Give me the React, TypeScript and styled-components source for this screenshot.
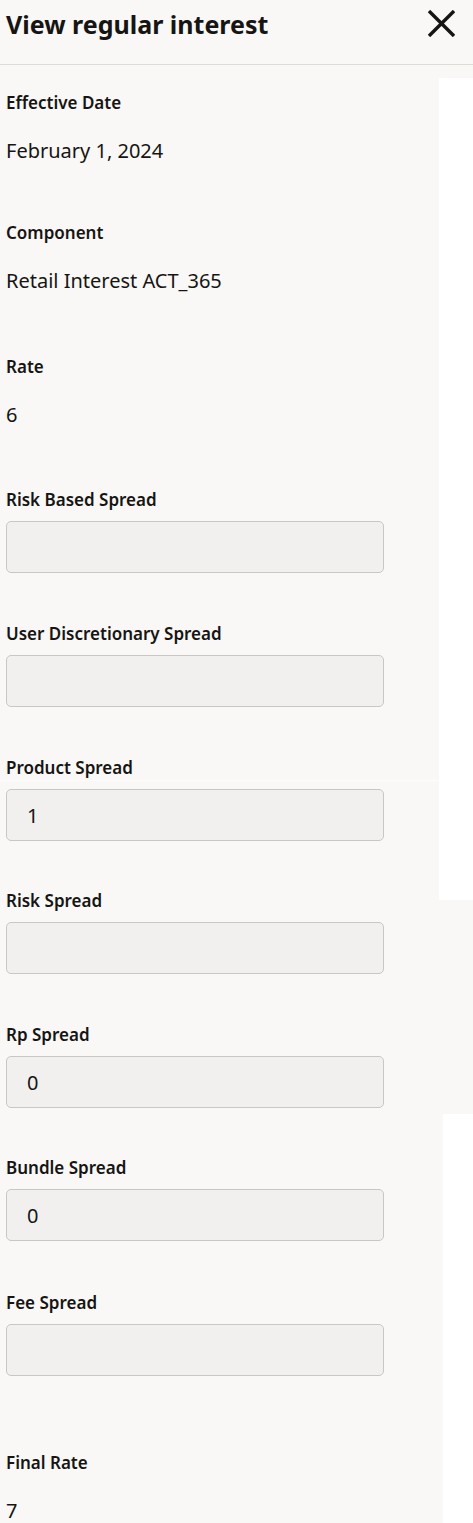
import styled, {createGlobalStyle} from "styled-components";

const GlobalStyle = createGlobalStyle`
html, body {
    margin: 0;
    padding: 0;
    background: #ffffff;
}
body {
    font-family: "Noto Sans", "Liberation Sans", sans-serif;
    color: #161513;
}
`;

type Field = {
    label: string,
    value?: string,
    input?: boolean,
    gapAfter: number,
}

const fields: Field[] = [
    {label: "Effective Date", value: "February 1, 2024", gapAfter: 58},
    {label: "Component", value: "Retail Interest ACT_365", gapAfter: 62},
    {label: "Rate", value: "6", gapAfter: 61},
    {label: "Risk Based Spread", input: true, value: "", gapAfter: 49},
    {label: "User Discretionary Spread", input: true, value: "", gapAfter: 49},
    {label: "Product Spread", input: true, value: "1", gapAfter: 48},
    {label: "Risk Spread", input: true, value: "", gapAfter: 49},
    {label: "Rp Spread", input: true, value: "0", gapAfter: 48},
    {label: "Bundle Spread", input: true, value: "0", gapAfter: 50},
    {label: "Fee Spread", input: true, value: "", gapAfter: 75},
    {label: "Final Rate", value: "7", gapAfter: 0},
];

// the pale strips on the right side of the reference are part of the panel surface
const Panel = styled.div`
min-height: 1523px;
background:
    linear-gradient(#ffffff, #ffffff) no-repeat right 0 top 78px / 34px 822px,
    linear-gradient(#ffffff, #ffffff) no-repeat right 0 top 1114px / 30px 409px,
    linear-gradient(#fdfdfc, #fdfdfc) no-repeat left 0 top 780px / 439px 1px,
    #f9f8f6;
`;

const Header = styled.header`
display: flex;
align-items: center;
justify-content: space-between;
height: 65px;
box-sizing: border-box;
padding: 0 18px 17px 6px;
border-bottom: 1px solid #dddbd8;
`;

const Title = styled.h1`
margin: 0;
font-size: 25px;
font-weight: 700;
line-height: 32px;
`;

const CloseButton = styled.button`
display: flex;
background: transparent;
border: none;
padding: 0;
cursor: pointer;
color: #161513;
`;

const Body = styled.div`
padding: 26px 0 0 6px;
`;

const FieldBlock = styled.div<{$gap: number}>`
display: flex;
flex-direction: column;
margin-bottom: ${p => p.$gap}px;
`;

const Label = styled.div`
font-size: 17px;
font-weight: 600;
line-height: 24px;
`;

const Value = styled.div`
margin-top: 24px;
font-size: 20px;
line-height: 24px;
`;

const InputBox = styled.div`
margin-top: 9px;
width: 378px;
height: 52px;
box-sizing: border-box;
border: 1px solid #c9c7c4;
border-radius: 5px;
background: #f1f0ee;
display: flex;
align-items: center;
padding-left: 20px;
font-size: 20px;
`;

function CloseIcon() {
    return <svg width="27" height="27" viewBox="0 0 27 27" fill="none">
        <path d="M1 1 L26 26 M26 1 L1 26" stroke="currentColor" strokeWidth="3.4" />
    </svg>;
}

export default function App() {
    return <>
        <GlobalStyle />
        <Panel>
            <Header>
                <Title>View regular interest</Title>
                <CloseButton title="Close"><CloseIcon /></CloseButton>
            </Header>
            <Body>
                {fields.map(f => <FieldBlock key={f.label} $gap={f.gapAfter}>
                    <Label>{f.label}</Label>
                    {f.input ? <InputBox>{f.value}</InputBox> : <Value>{f.value}</Value>}
                </FieldBlock>)}
            </Body>
        </Panel>
    </>;
}
